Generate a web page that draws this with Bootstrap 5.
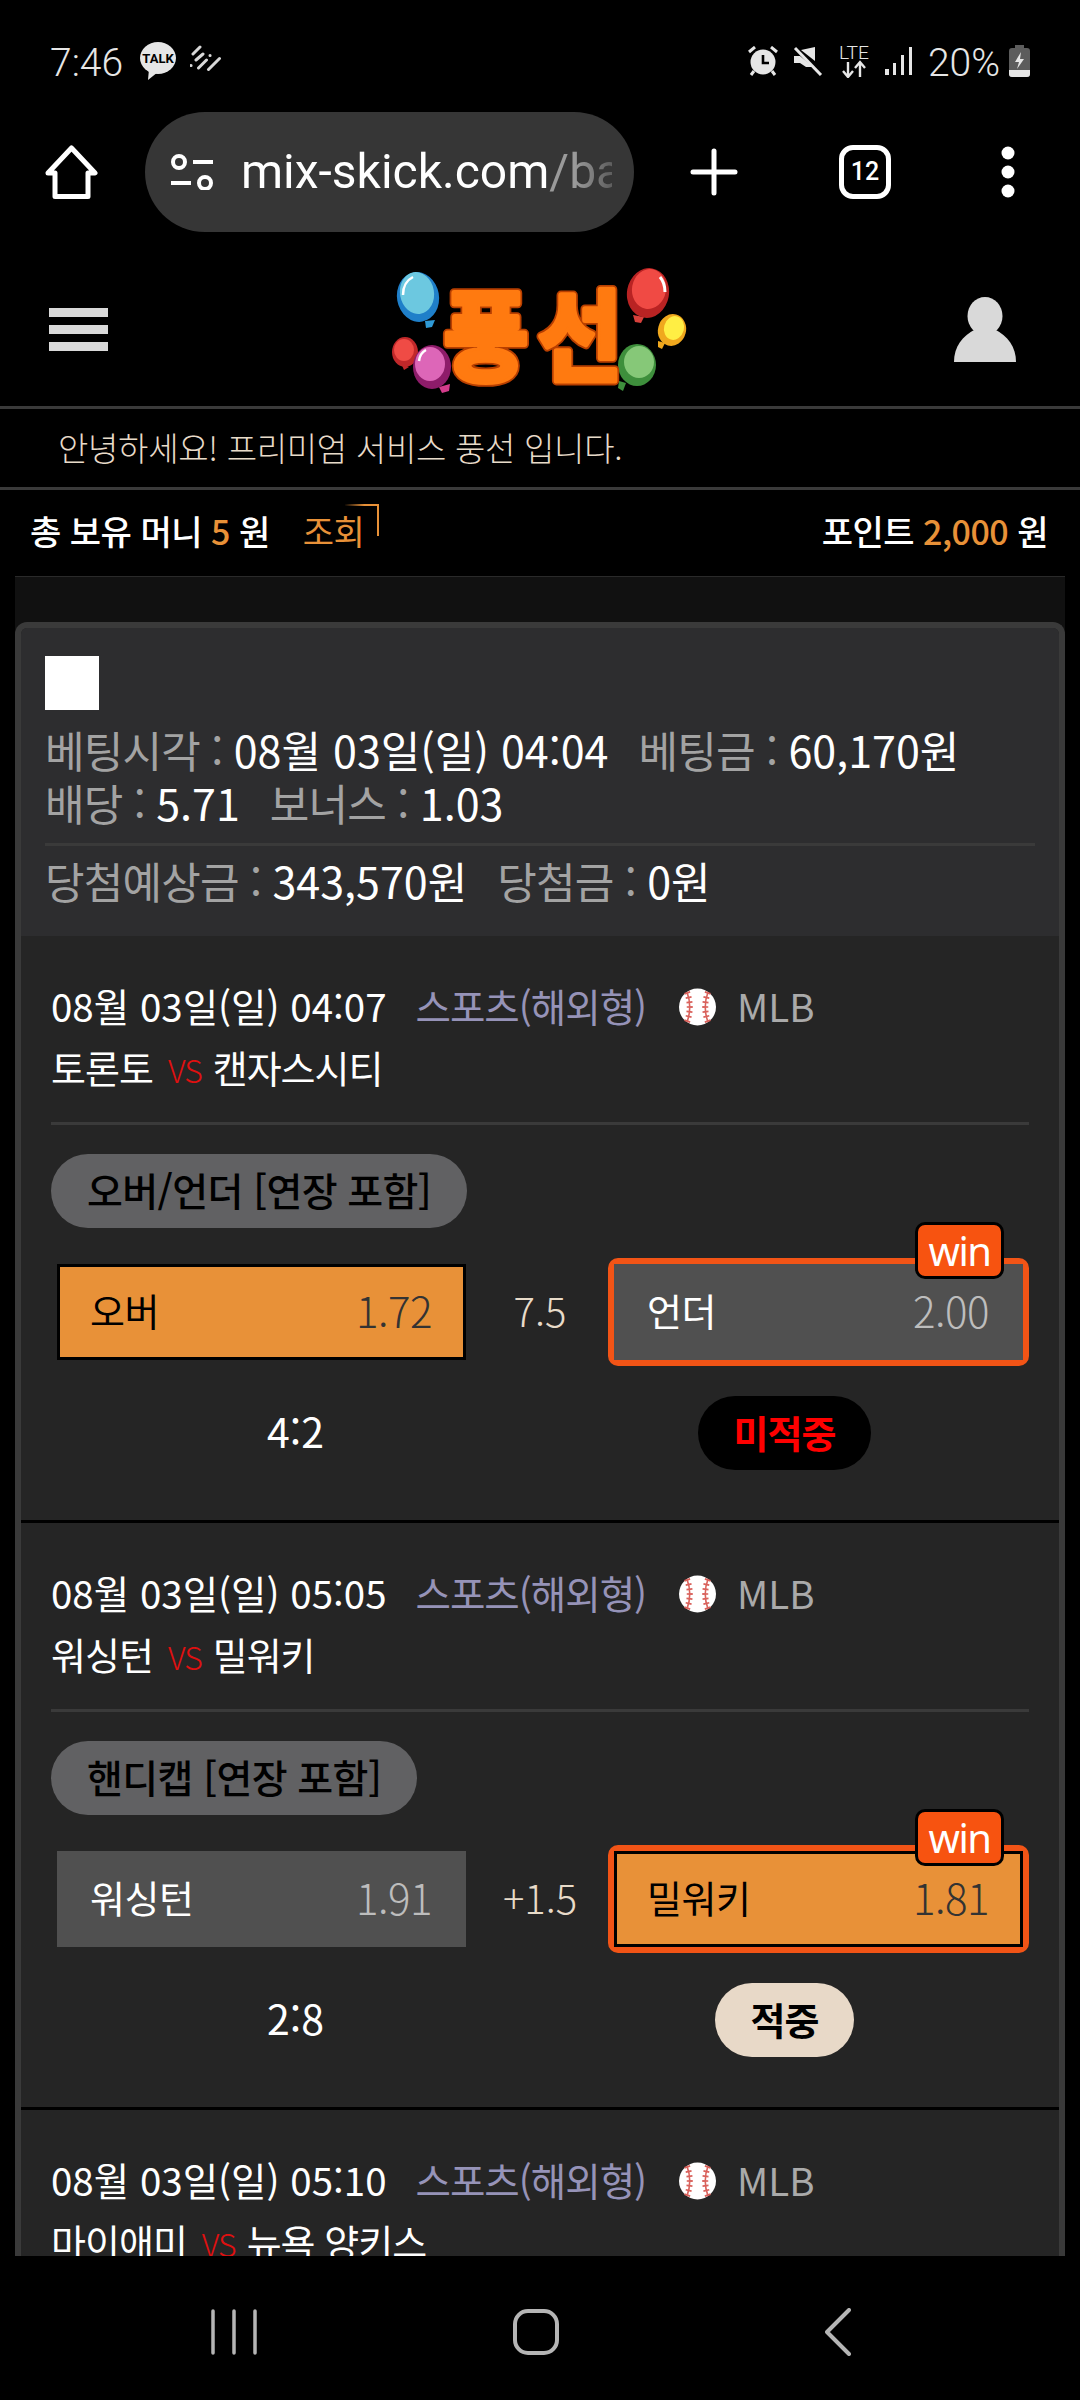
<!DOCTYPE html>
<html lang="ko">
<head>
    <meta charset="utf-8">
    <title>풍선</title>
    <link href="https://cdn.jsdelivr.net/npm/bootstrap@5.3.0/dist/css/bootstrap.min.css" rel="stylesheet">
    <style>
        html, body { background: #000; }
        body { font-family: "Noto Sans CJK KR", "Noto Sans", sans-serif; color: #fff; }
        .phone { width: 1080px; height: 2400px; overflow: hidden; }
        .roboto { font-family: Roboto, "Noto Sans", sans-serif; }

        /* status bar */
        .status-bar { height: 112px; padding: 41px 50px 31px; color: #e6e6e6; font-size: 39px; font-weight: 300; line-height: 40px; }
        .status-time { width: 90px; padding-top: 3px; }
        .status-talk { margin-right: 14px; }
        .status-right { gap: 15px; }
        .status-pct { margin-right: -6px; padding-top: 3px; }

        /* browser toolbar */
        .tool-bar { height: 120px; padding-left: 45px; }
        .url-pill { width: 489px; height: 120px; margin-left: 47px; padding-left: 25px; gap: 27px; background: #363636; border-radius: 60px; }
        .url-text { width: 371px; overflow: hidden; white-space: nowrap; font-size: 48px; font-weight: 400; -webkit-mask-image: linear-gradient(to right, #000 90%, rgba(0,0,0,.4)); mask-image: linear-gradient(to right, #000 90%, rgba(0,0,0,.4)); }
        .url-path { color: #9a9a9a; }
        .tool-plus { margin-left: 56px; }
        .tab-count { width: 52px; height: 54px; margin-left: 101px; border: 5px solid #fff; border-radius: 14px; font-size: 25px; font-weight: 500; }
        .tool-dots { margin-left: 110px; }

        /* site header */
        .site-head { height: 177px; display: grid; grid-template-columns: 1fr auto 1fr; padding: 21px 49px 0; border-bottom: 3px solid #3a3a3a; }
        .head-user { margin-left: auto; margin-right: 15px; }
        .site-notice { height: 81px; padding: 0 0 0 58px; border-bottom: 3px solid #3a3a3a; color: #e8dbc9; font-size: 33px; font-weight: 300; letter-spacing: -.3px; }
        .money-row { height: 86px; padding: 0 32px 5px 30px; font-size: 34px; font-weight: 500; letter-spacing: -.5px; }
        .money-val { color: #e89138; }
        .lookup-link { position: relative; margin-left: 33px; color: #e89138; font-weight: 400; }
        .lookup-link::after { content: ""; position: absolute; top: -2px; right: -15px; width: 34px; height: 32px; border-top: 2px solid; border-right: 2px solid; border-image: linear-gradient(to right, transparent, #e89138 60%) 1; }

        /* bet panel */
        .bet-panel { margin: 0 15px; padding-top: 45px; background: #111; border-top: 1px solid #2a2a2a; flex: 1 1 auto; min-height: 0; }
        .bet-card { --bs-card-border-width: 0; --bs-card-bg: #252525; --bs-card-color: #fff; border: 6px solid #3a3a3a; border-bottom: 0; border-radius: 12px 12px 0 0; overflow: hidden; }
        .sum-box { background: #2d2d2f; border: 0; padding: 28px 24px 29px; font-size: 43px; line-height: 53px; color: #a3a3a3; border-radius: 0 !important; letter-spacing: -.8px; }
        .sum-square { width: 54px; height: 54px; margin-bottom: 13px; background: #fff; }
        .sum-item { margin-right: 30px; }
        .sum-box b { color: #fff; font-weight: 400; letter-spacing: 0; }
        .sum-line { height: 3px; margin: 14px 0 8px; background: #3a3a3a; }

        /* one game */
        .game-block { height: 587px; padding: 49px 30px 0; border-bottom: 3px solid #000; }
        .game-meta { height: 44px; font-size: 38.5px; line-height: 44px; white-space: nowrap; }
        .game-meta span { padding-bottom: 5px; }
        .game-kind { margin-left: 29px; color: #9693b8; letter-spacing: -1px; }
        .game-ball { margin-left: 33px; }
        .game-league { margin-left: 21px; color: #aaa; }
        .game-teams { height: 44px; margin-top: 16px; font-size: 38px; line-height: 44px; letter-spacing: -1px; }
        .game-vs { color: #e01010; font-size: 32px; font-weight: 300; margin: 0 11px 0 15px; }
        .game-line { height: 3px; margin: 33px 0 29px; background: #3a3a3a; }
        .market-pill { height: 74px; padding: 0 36px 4px; background: #616163; color: #000; font-size: 39px; font-weight: 500; letter-spacing: -.6px; }
        .bet-row { height: 108px; margin-top: 30px; }
        .bet-mid { width: 142px; padding: 0 0 5px 6px; text-align: center; color: #e8dbc9; font-size: 40px; font-weight: 300; }
        .bet-btn { width: 409px; height: 96px; padding: 0 31px 5px 30px; border: 3px solid transparent; font-size: 38px; letter-spacing: -.5px; }
        .bet-left { margin-left: 6px; }
        .bet-on { background: #e89138; border-color: #000; color: #000; }
        .bet-on .bet-odds { color: #333; }
        .bet-off { background: #505050; color: #fff; }
        .bet-off .bet-odds { color: #bdbdbd; }
        .bet-odds { font-size: 42px; font-weight: 300; }
        .win-wrap { position: relative; padding: 6px; background: #f25416; border-radius: 10px; }
        .win-tag { position: absolute; top: -36px; right: 25px; width: 89px; height: 57px; background: #f75310; border: 3px solid #000; border-radius: 10px; color: #fff; font-family: "Noto Sans", sans-serif; font-size: 40px; letter-spacing: -1.5px; line-height: 1; }
        .result-row { height: 74px; margin-top: 30px; font-size: 41px; }
        .result-score { padding-bottom: 5px; }
        .result-pill { height: 74px; padding: 0 36px 4px; font-size: 38px; font-weight: 700; letter-spacing: -1px; }
        .result-miss { background: #000; color: #f00; }
        .result-hit { background: #e8d9c8; color: #000; }

        /* android nav */
        .nav-keys { flex: 0 0 144px; padding: 8px 8px 0 0; background: #000; position: relative; }
        .nav-key { width: 302px; }
    </style>
</head>
<body>
<svg class="d-none">
    <symbol id="ball" viewBox="0 0 37 38">
        <circle cx="18.5" cy="19" r="18.5" fill="#fff"/>
        <g fill="none" stroke="#d9625c">
            <path d="M8 4q5.500 15 0 30M29 4q-5.500 15 0 30" stroke-width="1.600"/>
            <path d="M8 4q5.500 15 0 30M29 4q-5.500 15 0 30" stroke-width="6" stroke-dasharray="1.800 3"/>
        </g>
    </symbol>
</svg>
<div class="phone d-flex flex-column">

    <div class="status-bar d-flex align-items-center justify-content-between roboto flex-shrink-0">
        <div class="d-flex align-items-center">
            <span class="status-time">7:46</span>
            <svg class="status-talk" width="36" height="40" viewBox="0 0 36 40">
                <ellipse cx="18" cy="17" rx="18" ry="16" fill="#e6e6e6"/>
                <path d="M9 28l-1 11 10-8z" fill="#e6e6e6"/>
                <text x="18" y="22" text-anchor="middle" font-size="13" font-weight="700" fill="#000" font-family="Roboto">TALK</text>
            </svg>
            <svg width="32" height="32" viewBox="0 0 32 32" fill="none" stroke="#d8d8d8" stroke-width="3" stroke-linecap="round">
                <path d="M3 9l7-7M6 15l7-6M1 20.500h.1M8.500 23l8-8M20 10.500h.1M18.500 24.500l11-11"/>
            </svg>
        </div>
        <div class="d-flex align-items-center status-right">
            <svg width="30" height="30" viewBox="0 0 30 30" fill="#e6e6e6">
                <circle cx="15" cy="16" r="12.500"/>
                <path d="M15 9v8h6" fill="none" stroke="#000" stroke-width="2.600"/>
                <path d="M1 6l6-5M29 6l-6-5M6 25l-3 4M24 25l3 4" stroke="#e6e6e6" stroke-width="3" fill="none"/>
            </svg>
            <svg width="30" height="30" viewBox="0 0 30 30" fill="#e6e6e6">
                <path d="M22 1v14L8 4zM1 10h6l13 11-1 0-6 0-6-4H1z"/>
                <path d="M2 2l26 27" stroke="#e6e6e6" stroke-width="3"/>
            </svg>
            <svg width="32" height="34" viewBox="0 0 32 34">
                <text x="1" y="15" font-size="19" textLength="30" lengthAdjust="spacingAndGlyphs" fill="#e6e6e6" font-family="Roboto">LTE</text>
                <path d="M10 18v14M5 27l5 6 5-6M22 33V19M17 24l5-6 5 6" fill="none" stroke="#e6e6e6" stroke-width="2.400"/>
            </svg>
            <svg width="28" height="30" viewBox="0 0 28 30" fill="#e6e6e6">
                <rect x="0" y="23" width="4" height="6"/>
                <rect x="8" y="17" width="3" height="12"/>
                <rect x="16" y="9" width="3" height="20"/>
                <rect x="24" y="1" width="3" height="28"/>
            </svg>
            <span class="status-pct">20%</span>
            <svg width="21" height="32" viewBox="0 0 21 32">
                <path d="M6 0h9v3h3a3 3 0 0 1 3 3v23a3 3 0 0 1-3 3H3a3 3 0 0 1-3-3V6a3 3 0 0 1 3-3h3z" fill="#5c5c5c"/>
                <path d="M0 25h21v4a3 3 0 0 1-3 3H3a3 3 0 0 1-3-3z" fill="#e6e6e6"/>
                <path d="M12 7l-6 10h4l-2 7 7-10h-4z" fill="#e6e6e6"/>
            </svg>
        </div>
    </div>

    <div class="tool-bar d-flex align-items-center roboto flex-shrink-0">
        <svg width="53" height="54" viewBox="0 0 53 54">
            <path d="M10 51.500V28H3L26.500 3 50 28h-7v23.500z" fill="none" stroke="#fff" stroke-width="5" stroke-linejoin="round"/>
        </svg>
        <div class="url-pill d-flex align-items-center">
            <svg class="flex-shrink-0" width="44" height="36" viewBox="0 0 44 36" fill="none" stroke="#fff" stroke-width="4">
                <circle cx="9" cy="8" r="6"/>
                <path d="M23 8h20M1 29h20"/>
                <circle cx="35" cy="29" r="6"/>
            </svg>
            <span class="url-text">mix-skick.com<span class="url-path">/ba</span></span>
        </div>
        <svg class="tool-plus" width="48" height="48" viewBox="0 0 48 48" stroke="#fff" stroke-width="5" stroke-linecap="round">
            <path d="M24 3v42M3 24h42"/>
        </svg>
        <span class="tab-count d-flex align-items-center justify-content-center">12</span>
        <svg class="tool-dots" width="14" height="52" viewBox="0 0 14 52" fill="#fff">
            <circle cx="7" cy="7" r="6.500"/>
            <circle cx="7" cy="26" r="6.500"/>
            <circle cx="7" cy="45" r="6.500"/>
        </svg>
    </div>

    <header class="site-head align-items-center flex-shrink-0">
        <svg width="59" height="43" viewBox="0 0 59 43" fill="#d9d9d9">
            <rect width="59" height="9"/>
            <rect y="17" width="59" height="9"/>
            <rect y="34" width="59" height="9"/>
        </svg>
        <svg width="302" height="130" viewBox="0 0 302 130">
            <g>
                <path d="M12 98l8 4-5 3z" fill="#c0282a"/>
                <ellipse cx="16" cy="87" rx="13" ry="15" fill="#c0282a"/>
                <ellipse cx="15" cy="85" rx="10" ry="11" fill="#ef4b45"/>
                <path d="M50 122l11-3-1 7-7 2z" fill="#d43c8c"/>
                <ellipse cx="43" cy="102" rx="19" ry="22" fill="#8e1c6a"/>
                <ellipse cx="41" cy="99" rx="15" ry="17" fill="#dd66b8"/>
                <path d="M30 96q1-8 7-11" fill="none" stroke="#fff" stroke-width="2.500"/>
                <path d="M36 56l10-1-3 7-6 1z" fill="#2f9ad6"/>
                <ellipse cx="29" cy="32" rx="21" ry="25" fill="#1f7fc9" transform="rotate(-10 29 32)"/>
                <ellipse cx="28" cy="28" rx="17" ry="21" fill="#6cc8e0" transform="rotate(-10 28 28)"/>
                <path d="M14 30q0-13 10-18" fill="none" stroke="#fff" stroke-width="2.500"/>
                <path d="M244 50l11 2-3 6-6-1z" fill="#d8413c"/>
                <ellipse cx="259" cy="28" rx="21" ry="25" fill="#b92323" transform="rotate(10 259 28)"/>
                <ellipse cx="260" cy="24" rx="17" ry="20" fill="#f04a44" transform="rotate(10 260 24)"/>
                <path d="M271 12q5 6 5 15" fill="none" stroke="#fff" stroke-width="3"/>
                <path d="M269 76l7 2-3 6-4-2z" fill="#f0a81e"/>
                <ellipse cx="283" cy="65" rx="14" ry="16" fill="#f0a81e" transform="rotate(15 283 65)"/>
                <ellipse cx="285" cy="63" rx="10" ry="12" fill="#ffee44" transform="rotate(15 285 63)"/>
                <path d="M230 116l7 2-3 8-5-3z" fill="#3e8f3c"/>
                <ellipse cx="248" cy="100" rx="19" ry="21" fill="#3e8f3c"/>
                <ellipse cx="250" cy="97" rx="15" ry="16" fill="#86c878"/>
            </g>
            <g font-family="Noto Sans CJK KR" font-weight="700" font-size="92" text-anchor="middle" stroke-linejoin="round" paint-order="stroke">
                <g fill="#b83f00" stroke="#b83f00" stroke-width="9">
                    <text transform="translate(97 108) scale(1 1.08)">풍</text>
                    <text transform="translate(191 108) scale(1 1.08)">선</text>
                </g>
                <g fill="#ff7a10" stroke="#ff7a10" stroke-width="5.500">
                    <text transform="translate(97 108) scale(1 1.08)">풍</text>
                    <text transform="translate(191 108) scale(1 1.08)">선</text>
                </g>
            </g>
        </svg>
        <svg class="head-user" width="62" height="65" viewBox="0 0 62 65" fill="#d9d9d9">
            <ellipse cx="31" cy="19" rx="17.500" ry="19"/>
            <path d="M0 65C0 50 8 39 22 32h18c14 7 22 18 22 33z"/>
        </svg>
    </header>

    <div class="site-notice d-flex align-items-center flex-shrink-0">안녕하세요! 프리미엄 서비스 풍선 입니다.</div>

    <div class="money-row d-flex align-items-center justify-content-between flex-shrink-0">
        <div>총 보유 머니 <span class="money-val">5</span> 원<span class="lookup-link">조회</span></div>
        <div>포인트 <span class="money-val">2,000</span> 원</div>
    </div>

    <main class="bet-panel overflow-hidden">
        <div class="card bet-card">
            <div class="card-header sum-box">
                <div class="sum-square"></div>
                <div><span class="sum-item">베팅시각 : <b>08월 03일(일) 04:04</b></span><span>베팅금 : <b>60,170원</b></span></div>
                <div><span class="sum-item">배당 : <b>5.71</b></span><span>보너스 : <b>1.03</b></span></div>
                <div class="sum-line"></div>
                <div><span class="sum-item">당첨예상금 : <b>343,570원</b></span><span>당첨금 : <b>0원</b></span></div>
            </div>

            <section class="game-block">
                <div class="game-meta d-flex align-items-center">
                    <span>08월 03일(일) 04:07</span>
                    <span class="game-kind">스포츠(해외형)</span>
                    <svg class="game-ball" width="37" height="38"><use href="#ball"/></svg>
                    <span class="game-league">MLB</span>
                </div>
                <div class="game-teams">토론토<span class="game-vs">VS</span>캔자스시티</div>
                <div class="game-line"></div>
                <span class="market-pill d-inline-flex align-items-center rounded-pill">오버/언더 [연장 포함]</span>
                <div class="bet-row d-flex align-items-center">
                    <div class="bet-btn bet-left bet-on d-flex align-items-center justify-content-between"><span>오버</span><span class="bet-odds">1.72</span></div>
                    <div class="bet-mid">7.5</div>
                    <div class="win-wrap">
                        <div class="bet-btn bet-off d-flex align-items-center justify-content-between"><span>언더</span><span class="bet-odds">2.00</span></div>
                        <span class="win-tag d-flex align-items-center justify-content-center">win</span>
                    </div>
                </div>
                <div class="result-row row g-0 align-items-center text-center">
                    <div class="col-6 result-score">4:2</div>
                    <div class="col-6"><span class="result-pill result-miss d-inline-flex align-items-center rounded-pill">미적중</span></div>
                </div>
            </section>

            <section class="game-block">
                <div class="game-meta d-flex align-items-center">
                    <span>08월 03일(일) 05:05</span>
                    <span class="game-kind">스포츠(해외형)</span>
                    <svg class="game-ball" width="37" height="38"><use href="#ball"/></svg>
                    <span class="game-league">MLB</span>
                </div>
                <div class="game-teams">워싱턴<span class="game-vs">VS</span>밀워키</div>
                <div class="game-line"></div>
                <span class="market-pill d-inline-flex align-items-center rounded-pill">핸디캡 [연장 포함]</span>
                <div class="bet-row d-flex align-items-center">
                    <div class="bet-btn bet-left bet-off d-flex align-items-center justify-content-between"><span>워싱턴</span><span class="bet-odds">1.91</span></div>
                    <div class="bet-mid">+1.5</div>
                    <div class="win-wrap">
                        <div class="bet-btn bet-on d-flex align-items-center justify-content-between"><span>밀워키</span><span class="bet-odds">1.81</span></div>
                        <span class="win-tag d-flex align-items-center justify-content-center">win</span>
                    </div>
                </div>
                <div class="result-row row g-0 align-items-center text-center">
                    <div class="col-6 result-score">2:8</div>
                    <div class="col-6"><span class="result-pill result-hit d-inline-flex align-items-center rounded-pill">적중</span></div>
                </div>
            </section>

            <section class="game-block">
                <div class="game-meta d-flex align-items-center">
                    <span>08월 03일(일) 05:10</span>
                    <span class="game-kind">스포츠(해외형)</span>
                    <svg class="game-ball" width="37" height="38"><use href="#ball"/></svg>
                    <span class="game-league">MLB</span>
                </div>
                <div class="game-teams">마이애미<span class="game-vs">VS</span>뉴욕 양키스</div>
            </section>
        </div>
    </main>

    <nav class="nav-keys d-flex align-items-center justify-content-center">
        <div class="nav-key text-center">
            <svg width="46" height="46" viewBox="0 0 46 46" stroke="#b5b5b5" stroke-width="3.500" stroke-linecap="round"><path d="M2 2v42M23 2v42M44 2v42"/></svg>
        </div>
        <div class="nav-key text-center">
            <svg width="46" height="46" viewBox="0 0 46 46" fill="none" stroke="#b5b5b5" stroke-width="4"><rect x="2" y="2" width="42" height="42" rx="13"/></svg>
        </div>
        <div class="nav-key text-center">
            <svg width="26" height="48" viewBox="0 0 26 48" fill="none" stroke="#b5b5b5" stroke-width="4" stroke-linecap="round" stroke-linejoin="round"><path d="M24 2L2 24l22 22"/></svg>
        </div>
    </nav>
</div>
<script src="https://cdn.jsdelivr.net/npm/bootstrap@5.3.0/dist/js/bootstrap.bundle.min.js"></script>
</body>
</html>
